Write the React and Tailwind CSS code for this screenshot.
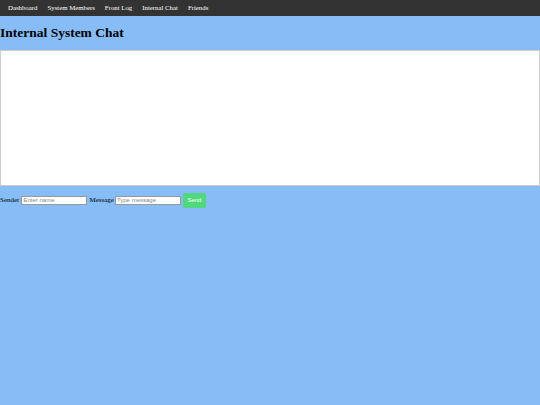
import React, { useState } from 'react';

const links = ['Dashboard', 'System Members', 'Front Log', 'Internal Chat', 'Friends'];

const App = () => {
    const [sender, setSender] = useState('');
    const [message, setMessage] = useState('');

    return (
        <div className="min-h-screen bg-[#86bdf6] font-['Liberation_Serif',serif] text-black">
            <nav className="h-[16px] bg-[#333333] flex items-center gap-[10px] px-[8px]">
                {links.map(l => (
                    <a key={l} className="text-white text-[6.8px] leading-none">{l}</a>
                ))}
            </nav>

            <h1 className="text-[13.5px] font-bold leading-none mt-[10px] mb-[10px]">Internal System Chat</h1>

            {/* message list */}
            <div className="h-[136px] bg-white border border-[#cccccc]"></div>

            <form className="flex items-center mt-[7px] text-[7px]" onSubmit={e => e.preventDefault()}>
                <label>Sender</label>
                <input
                    value={sender}
                    onChange={e => setSender(e.target.value)}
                    placeholder="Enter name"
                    className="ml-[2px] w-[66px] h-[9px] bg-white border border-[#999] px-[1px] text-[6px] font-['Liberation_Sans',sans-serif] placeholder:text-[#888]"
                />
                <label className="ml-[2px]">Message</label>
                <input
                    value={message}
                    onChange={e => setMessage(e.target.value)}
                    placeholder="Type message"
                    className="ml-[1px] w-[66px] h-[9px] bg-white border border-[#999] px-[1px] text-[6px] font-['Liberation_Sans',sans-serif] placeholder:text-[#888]"
                />
                <button className="ml-[2px] w-[23px] h-[15px] rounded-[2px] bg-[#4fd97c] text-white text-[6px] font-['Liberation_Sans',sans-serif]">
                    Send
                </button>
            </form>
        </div>
    );
};

export default App;
